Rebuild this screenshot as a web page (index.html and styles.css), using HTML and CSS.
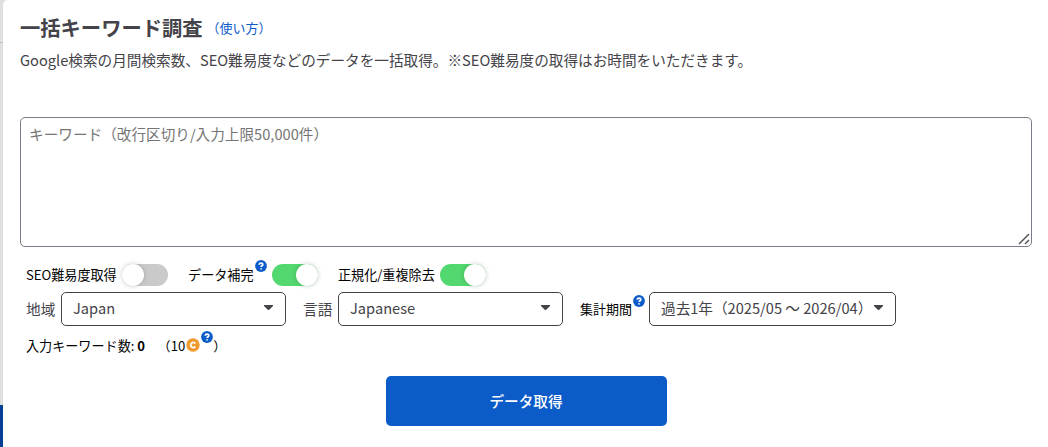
FILE: index.html
```html
<!DOCTYPE html>
<html lang="ja">
<head>
    <meta charset="UTF-8">
    <meta name="viewport" content="width=device-width, initial-scale=1.0">
    <title>一括キーワード調査</title>
    <link rel="stylesheet" href="styles.css">
</head>
<body>
    <div class="side">
        <div class="side-top"></div>
        <div class="side-menu"></div>
        <div class="side-footer"></div>
    </div>

    <main class="card">
        <div class="heading">
            <h1>一括キーワード調査</h1>
            <a class="usage" href="#">（使い方）</a>
        </div>
        <p class="description">Google検索の月間検索数、SEO難易度などのデータを一括取得。※SEO難易度の取得はお時間をいただきます。</p>

        <div class="keywords-box">
            <textarea class="keywords" placeholder="キーワード（改行区切り/入力上限50,000件）"></textarea>
            <svg class="grip" viewBox="0 0 12 12"><path d="M1 11L11 1M7 11L11 7"/></svg>
        </div>

        <div class="switches">
            <label class="switch-item">SEO難易度取得<input type="checkbox" class="switch"></label>
            <label class="switch-item">データ補完<svg class="help" viewBox="0 0 12 12"><circle cx="6" cy="6" r="5.9"/><path d="M4.2 4.7C4.3 2.5 7.9 2.6 7.8 4.6C7.7 5.8 6.1 5.7 6.1 7.1M6.1 8.3V9.6"/></svg><input type="checkbox" class="switch" checked></label>
            <label class="switch-item">正規化/重複除去<input type="checkbox" class="switch" checked></label>
        </div>

        <div class="selects">
            <span class="select-label">地域</span>
            <button class="select" type="button">Japan<span class="caret"></span></button>
            <span class="select-label language">言語</span>
            <button class="select" type="button">Japanese<span class="caret"></span></button>
            <span class="period-label">集計期間<svg class="help" viewBox="0 0 12 12"><circle cx="6" cy="6" r="5.9"/><path d="M4.2 4.7C4.3 2.5 7.9 2.6 7.8 4.6C7.7 5.8 6.1 5.7 6.1 7.1M6.1 8.3V9.6"/></svg></span>
            <button class="select period" type="button">過去1年（2025/05 ～ 2026/04）<span class="caret"></span></button>
        </div>

        <div class="count">
            <span>入力キーワード数: <b>0</b></span>
            <span class="cost">（10<svg class="coin" viewBox="0 0 14 14"><circle cx="7" cy="7" r="6.7"/><path d="M9.3 5.5C8 3.6 4.6 4.3 4.6 7S8 10.4 9.3 8.5"/></svg><svg class="help" viewBox="0 0 12 12"><circle cx="6" cy="6" r="5.9"/><path d="M4.2 4.7C4.3 2.5 7.9 2.6 7.8 4.6C7.7 5.8 6.1 5.7 6.1 7.1M6.1 8.3V9.6"/></svg>）</span>
        </div>

        <button class="submit" type="button">データ取得</button>
    </main>
</body>
</html>
```
FILE: styles.css
```css
* {
    box-sizing: border-box;
}

body {
    display: flex;
    height: 447px;
    margin: 0;
    overflow: hidden;
    background: #dfdfdf;
    color: #444349;
    font-family: "Noto Sans CJK JP", sans-serif;
    font-size: 14.63px;
}

button, textarea {
    font: inherit;
    color: inherit;
}

.side {
    display: flex;
    flex-direction: column;
    width: 3px;
}

.side-top {
    height: 43px;
    border-bottom: 1px solid #bdbdbd;
}

.side-menu {
    flex: 1;
}

.side-footer {
    height: 42px;
    background: #043f94;
}

.card {
    flex: 1;
    padding: 12px 16px 0 17px;
    border-radius: 5px 0 0 0;
    background: #fff;
}

.heading {
    display: flex;
    align-items: center;
    height: 31px;
}

h1 {
    margin: 0;
    font-size: 20.3px;
    line-height: 31px;
}

.usage {
    margin: 0 0 0 4px;
    color: #0b5bc9;
    font-size: 13px;
    text-decoration: none;
}

.description {
    height: 32px;
    margin: 1px 0 41px;
    line-height: 32px;
}

.keywords-box {
    position: relative;
    width: 1012px;
    height: 130px;
}

.keywords {
    display: block;
    width: 100%;
    height: 100%;
    padding: 5px 8px;
    border: 1px solid #7c7b87;
    border-radius: 5px;
    outline: none;
    line-height: 22px;
    resize: none;
}

.keywords::placeholder {
    color: #757575;
}

.grip {
    position: absolute;
    right: 2px;
    bottom: 2px;
    width: 12px;
    height: 12px;
    fill: none;
    stroke: #555;
    stroke-width: 1.5;
}

.switches {
    display: flex;
    height: 45px;
    padding: 11px 6px 0;
    color: #000;
    font-size: 13.1px;
}

.switch-item {
    display: flex;
    align-items: center;
    height: 32px;
    margin-right: 20px;
}

.switch {
    display: flex;
    width: 46px;
    height: 22px;
    margin: 2px 0 0 5.4px;
    border-radius: 11px;
    appearance: none;
    background: #cacaca;
}

.switch::before {
    content: "";
    width: 22px;
    height: 22px;
    border-radius: 50%;
    background: #fff;
    box-shadow: 0 0 5px rgba(0, 0, 0, 0.2);
}

.switch:checked {
    justify-content: flex-end;
    background: #53d86f;
}

.help {
    flex: none;
    width: 12px;
    height: 12px;
    margin: -16px 0 0 1px;
    fill: #0b5bc9;
}

.help path {
    fill: none;
    stroke: #fff;
    stroke-width: 1.7;
}

.selects {
    display: flex;
    align-items: center;
    height: 34px;
    padding-left: 6px;
}

.select-label {
    width: 29px;
    margin-top: -2px;
    white-space: nowrap;
}

.select {
    display: flex;
    align-items: center;
    justify-content: space-between;
    width: 225px;
    height: 34px;
    margin-left: 6px;
    padding: 0 12px 3px 11px;
    border: 1px solid #444349;
    border-radius: 5px;
    background: #fff;
}

.select.period {
    width: 247px;
    margin-left: 4px;
    white-space: nowrap;
}

.caret {
    flex: none;
    width: 9px;
    height: 5px;
    background: #444349;
    clip-path: polygon(0 0, 100% 0, 100% 20%, 55% 100%, 45% 100%, 0 20%);
}

.language {
    margin-left: 17px;
}

.period-label {
    display: flex;
    align-items: center;
    width: 65px;
    margin: -1px 0 0 17px;
    color: #000;
    font-size: 13px;
}

.count {
    display: flex;
    align-items: center;
    height: 38px;
    padding-left: 6px;
    color: #000;
    font-size: 13.1px;
}

.cost {
    display: flex;
    align-items: center;
    margin-left: 12.5px;
}

.coin {
    width: 14px;
    height: 14px;
    margin-left: 1px;
    fill: #f09a2d;
}

.coin path {
    fill: none;
    stroke: #fff;
    stroke-width: 1.8;
}

.submit {
    display: block;
    width: 281px;
    height: 50px;
    margin: 12px auto 0;
    padding: 0 0 2px;
    border: 0;
    border-radius: 5px;
    background: #0b5bc9;
    color: #fff;
    font-weight: 500;
}
```
